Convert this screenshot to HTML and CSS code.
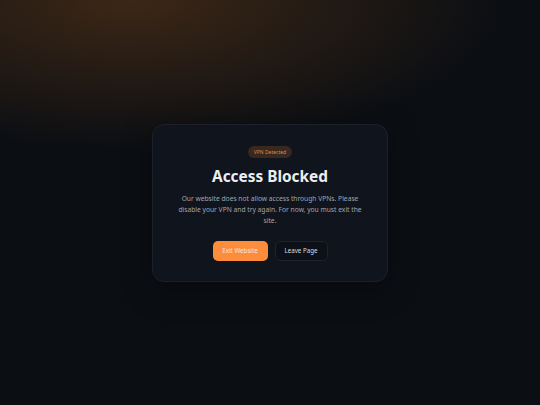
FILE: index.html
```html
<!DOCTYPE html>
<html lang="en">
<head>
    <meta charset="UTF-8">
    <meta name="viewport" content="width=device-width, initial-scale=1.0">
    <title>Access Blocked</title>
    <link rel="stylesheet" href="styles.css">
</head>
<body>
    <div class="glow"></div>
    <main class="page">
        <div class="block-card">
            <span class="badge">VPN Detected</span>
            <h1>Access Blocked</h1>
            <p>Our website does not allow access through VPNs. Please disable your VPN and try again. For now, you must exit the site.</p>

            <div class="actions">
                <button class="btn btn-primary">Exit Website</button>
                <button class="btn btn-ghost">Leave Page</button>
            </div>
        </div>
    </main>
</body>
</html>
```

FILE: styles.css
```css
html, body {
    height: 100%;
}

body {
    margin: 0;
    font-family: "Noto Sans", "Open Sans", sans-serif;
    background: #0b0e13;
    overflow: hidden;
}

.glow {
    position: absolute;
    inset: 0;
    background: radial-gradient(ellipse 380px 150px at 130px 0px, rgba(120, 70, 25, 0.45), rgba(120, 70, 25, 0) 100%);
    pointer-events: none;
}

.page {
    position: relative;
    height: 100%;
    display: flex;
    justify-content: center;
    align-items: center;
}

.block-card {
    width: 236px;
    box-sizing: border-box;
    padding: 21px 22px 20px;
    display: flex;
    flex-direction: column;
    align-items: center;
    background: #10141c;
    border: 1px solid #1b2029;
    border-radius: 12px;
    text-align: center;
    box-shadow: 0 8px 30px rgba(0, 0, 0, 0.35);
}

.badge {
    padding: 0 6px;
    height: 12px;
    line-height: 12px;
    font-size: 5px;
    color: #d98a4e;
    background: #38281e;
    border-radius: 6px;
}

h1 {
    margin: 9px 0 6px;
    font-size: 15.4px;
    font-weight: 700;
    color: #eceef2;
    line-height: 20px;
}

p {
    margin: 0 0 15px;
    font-size: 6.7px;
    line-height: 11px;
    color: #a0a5b0;
}

.actions {
    display: flex;
    justify-content: center;
    gap: 7px;
}

.btn {
    height: 20px;
    padding: 0;
    font-family: inherit;
    font-size: 6.2px;
    white-space: nowrap;
    border-radius: 5px;
    cursor: pointer;
}

.btn-primary {
    background: #fd8c3b;
    border: none;
    color: #fde8d8;
    width: 55px;
}

.btn-primary:hover {
    background: #ff9b51;
}

.btn-ghost {
    background: #0d1117;
    border: 1px solid #1d222c;
    color: #d9dce2;
    width: 53px;
}
```
